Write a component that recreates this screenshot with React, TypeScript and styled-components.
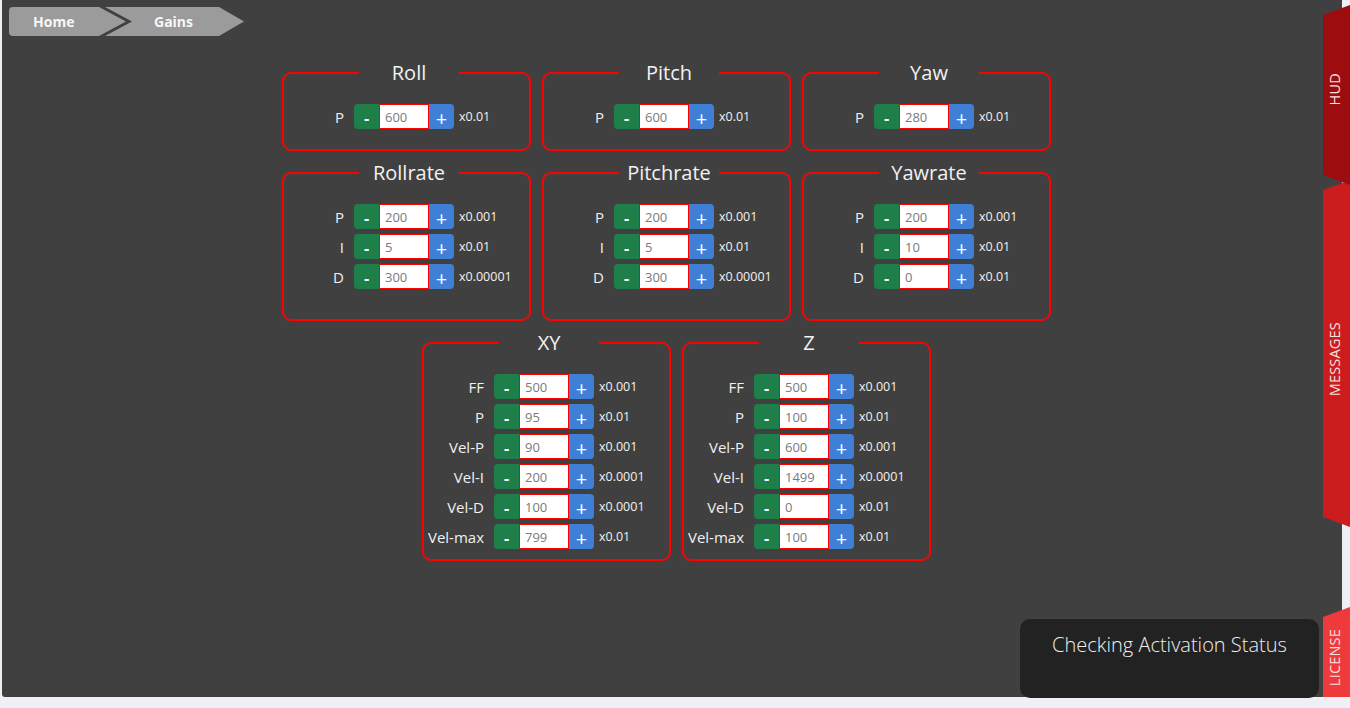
import React from 'react';
import styled, { createGlobalStyle } from 'styled-components';

type GainRow = { label: string; value: string; scale: string };
type GainGroup = { title: string; rows: GainRow[] };

const rollrate: GainRow[] = [
  { label: 'P', value: '200', scale: 'x0.001' },
  { label: 'I', value: '5', scale: 'x0.01' },
  { label: 'D', value: '300', scale: 'x0.00001' },
];

const layout: { offset: number; pad: number; groups: GainGroup[] }[] = [
  {
    offset: 0,
    pad: 20,
    groups: [
      { title: 'Roll', rows: [{ label: 'P', value: '600', scale: 'x0.01' }] },
      { title: 'Pitch', rows: [{ label: 'P', value: '600', scale: 'x0.01' }] },
      { title: 'Yaw', rows: [{ label: 'P', value: '280', scale: 'x0.01' }] },
    ],
  },
  {
    offset: 0,
    pad: 30,
    groups: [
      { title: 'Rollrate', rows: rollrate },
      { title: 'Pitchrate', rows: rollrate },
      {
        title: 'Yawrate',
        rows: [
          { label: 'P', value: '200', scale: 'x0.001' },
          { label: 'I', value: '10', scale: 'x0.01' },
          { label: 'D', value: '0', scale: 'x0.01' },
        ],
      },
    ],
  },
  {
    offset: 140,
    pad: 10,
    groups: [
      {
        title: 'XY',
        rows: [
          { label: 'FF', value: '500', scale: 'x0.001' },
          { label: 'P', value: '95', scale: 'x0.01' },
          { label: 'Vel-P', value: '90', scale: 'x0.001' },
          { label: 'Vel-I', value: '200', scale: 'x0.0001' },
          { label: 'Vel-D', value: '100', scale: 'x0.0001' },
          { label: 'Vel-max', value: '799', scale: 'x0.01' },
        ],
      },
      {
        title: 'Z',
        rows: [
          { label: 'FF', value: '500', scale: 'x0.001' },
          { label: 'P', value: '100', scale: 'x0.01' },
          { label: 'Vel-P', value: '600', scale: 'x0.001' },
          { label: 'Vel-I', value: '1499', scale: 'x0.0001' },
          { label: 'Vel-D', value: '0', scale: 'x0.01' },
          { label: 'Vel-max', value: '100', scale: 'x0.01' },
        ],
      },
    ],
  },
];

const App = () => {
  return (
    <Page>
      <GlobalStyle />
      <Main>
        <Breadcrumb>
          <Crumb $first>Home</Crumb>
          <Crumb>Gains</Crumb>
        </Breadcrumb>

        <Panels>
          {layout.map((row, i) => (
            <PanelRow key={i} $offset={row.offset}>
              {row.groups.map((g) => (
                <Panel key={g.title} $pb={row.pad}>
                  <Legend>
                    <LegendText>{g.title}</LegendText>
                  </Legend>
                  <Rows>
                    {g.rows.map((r) => (
                      <Row key={r.label}>
                        <Label>{r.label}</Label>
                        <Stepper>
                          <MinusButton>-</MinusButton>
                          <ValueInput value={r.value} readOnly />
                          <PlusButton>+</PlusButton>
                        </Stepper>
                        <Scale>{r.scale}</Scale>
                      </Row>
                    ))}
                  </Rows>
                </Panel>
              ))}
            </PanelRow>
          ))}
        </Panels>
      </Main>

      <Sidebar>
        <Tab $color="#9d0c0f" $height={180} $z={2} $shift={-12}>
          <TabText>HUD</TabText>
        </Tab>
        <Tab $color="#cb1d1d" $height={347} $mt={-5} $z={1} $shift={12}>
          <TabText>MESSAGES</TabText>
        </Tab>
        <Tab $color="#ee3a3a" $height={90} $mt="auto" $shift={12} $flatBottom>
          <TabText>LICENSE</TabText>
        </Tab>
      </Sidebar>

      <Toast>Checking Activation Status</Toast>
    </Page>
  );
};

export default App;

// Styled Components
const GlobalStyle = createGlobalStyle`
  html, body {
    margin: 0;
    padding: 0;
    background: #eff0f5;
    font-family: "Open Sans", "Noto Sans", sans-serif;
  }
  * {
    box-sizing: border-box;
  }
`;

const Page = styled.div`
  position: relative;
  width: 1350px;
  height: 708px;
  background: #eff0f5;
  overflow: hidden;
`;

const Main = styled.div`
  margin-left: 2px;
  width: 1340px;
  height: 697px;
  background: #404040;
  border-bottom-left-radius: 3px;
`;

const Breadcrumb = styled.div`
  display: flex;
  padding: 7px 0 0 7px;
`;

const Crumb = styled.div<{ $first?: boolean }>`
  height: 29px;
  display: flex;
  align-items: center;
  background: #9b9b9b;
  color: #f7f7f7;
  font-size: 14px;
  font-weight: 700;
  width: ${(p) => (p.$first ? '117px' : '142px')};
  margin-left: ${(p) => (p.$first ? '0' : '-24px')};
  padding-left: ${(p) => (p.$first ? '24px' : '52px')};
  border-radius: ${(p) => (p.$first ? '4px 0 0 4px' : '0')};
  clip-path: ${(p) =>
    p.$first
      ? 'polygon(0 0, calc(100% - 27px) 0, 100% 50%, calc(100% - 27px) 100%, 0 100%)'
      : 'polygon(3px 0, calc(100% - 25px) 0, 100% 50%, calc(100% - 25px) 100%, 3px 100%, 30px 50%)'};
`;

const Panels = styled.div`
  display: flex;
  flex-direction: column;
  gap: 11px;
  margin-top: 26px;
  padding-left: 280px;
`;

const PanelRow = styled.div<{ $offset: number }>`
  display: flex;
  gap: 11px;
  padding-left: ${(p) => p.$offset}px;
`;

const Panel = styled.fieldset<{ $pb: number }>`
  width: 249px;
  margin: 0;
  min-width: 0;
  border: 2px solid #ff0000;
  border-radius: 9px;
  padding: 20px 0 ${(p) => p.$pb}px 0;
`;

const Legend = styled.legend`
  width: 100px;
  margin-left: 75px;
  padding: 0;
`;

const LegendText = styled.span`
  display: block;
  text-align: center;
  color: #f2f2f2;
  font-size: 20px;
  line-height: 22px;
`;

const Rows = styled.div`
  display: flex;
  flex-direction: column;
  gap: 5px;
`;

const Row = styled.div`
  display: flex;
  align-items: center;
  height: 25px;
`;

const Label = styled.span`
  width: 60px;
  margin-right: 10px;
  text-align: right;
  color: #f0f0f0;
  font-size: 15px;
`;

const Stepper = styled.div`
  display: flex;
  height: 25px;
`;

const StepButton = styled.div`
  width: 25px;
  height: 25px;
  display: flex;
  align-items: center;
  justify-content: center;
  color: #ffffff;
  padding-top: 3px;
`;

const MinusButton = styled(StepButton)`
  background: #1e7f4a;
  border-radius: 4px 0 0 4px;
  font-size: 16px;
  font-weight: 700;
`;

const PlusButton = styled(StepButton)`
  background: #3f80d6;
  border-radius: 0 4px 4px 0;
  font-size: 20px;
`;

const ValueInput = styled.input`
  width: 50px;
  height: 25px;
  margin: 0;
  border: 1px solid #ff0000;
  background: #ffffff;
  padding: 0 0 0 5px;
  color: #7a7a7a;
  font-family: "Open Sans", sans-serif;
  font-size: 13px;
  outline: none;
`;

const Scale = styled.span`
  margin-left: 5px;
  color: #f2f2f2;
  font-size: 12.5px;
`;

const Sidebar = styled.div`
  position: absolute;
  top: 5px;
  right: 0;
  width: 27px;
  height: 692px;
  display: flex;
  flex-direction: column;
`;

const Tab = styled.div<{
  $color: string;
  $height: number;
  $mt?: number | string;
  $z?: number;
  $shift?: number;
  $flatBottom?: boolean;
}>`
  position: relative;
  z-index: ${(p) => p.$z ?? 0};
  flex-shrink: 0;
  height: ${(p) => p.$height}px;
  margin-top: ${(p) => (typeof p.$mt === 'number' ? `${p.$mt}px` : p.$mt ?? '0')};
  padding-top: ${(p) => Math.max(p.$shift ?? 0, 0)}px;
  padding-bottom: ${(p) => Math.max(-(p.$shift ?? 0), 0)}px;
  background: ${(p) => p.$color};
  display: flex;
  align-items: center;
  justify-content: center;
  clip-path: ${(p) =>
    p.$flatBottom
      ? 'polygon(0 10px, 100% 0, 100% 100%, 0 100%)'
      : 'polygon(0 10px, 100% 0, 100% 100%, 0 calc(100% - 10px))'};
`;

const TabText = styled.span`
  writing-mode: vertical-rl;
  transform: rotate(180deg);
  color: #f7e0e0;
  font-size: 14.5px;
  letter-spacing: 0.2px;
  margin-left: -4px;
`;

const Toast = styled.div`
  position: absolute;
  left: 1020px;
  top: 619px;
  width: 299px;
  height: 79px;
  background: #222222;
  border-radius: 10px;
  color: #eeeeee;
  font-size: 20px;
  font-weight: 300;
  text-align: center;
  padding-top: 12px;
`;
